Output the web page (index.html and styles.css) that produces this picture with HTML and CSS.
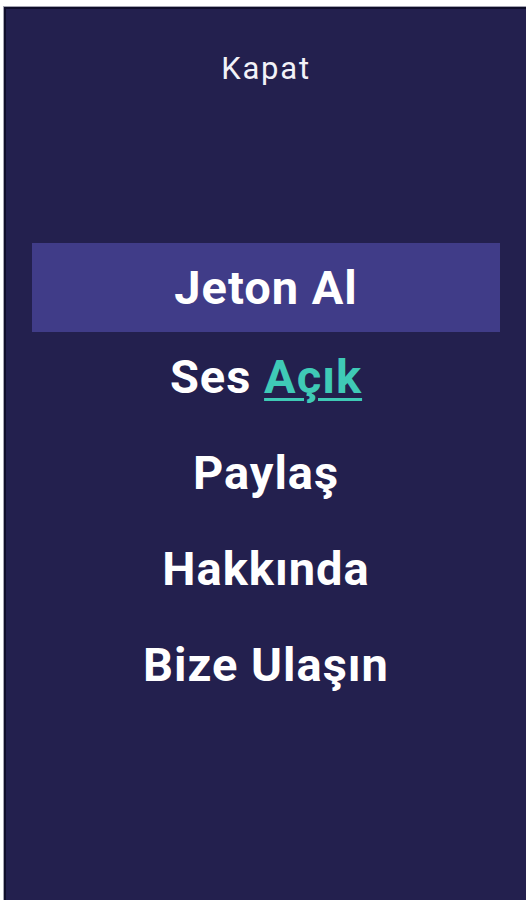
FILE: index.html
```html
<!DOCTYPE html>
<html lang="tr">
<head>
<meta charset="utf-8">
<link rel="stylesheet" href="styles.css">
</head>
<body>
<div class="frame">
  <div class="app">
    <div class="close">Kapat</div>
    <nav class="menu">
      <div class="item active">Jeton Al</div>
      <div class="item">Ses <span class="on">Açık</span></div>
      <div class="item">Paylaş</div>
      <div class="item">Hakkında</div>
      <div class="item">Bize Ulaşın</div>
    </nav>
  </div>
</div>
</body>
</html>
```
FILE: styles.css
```css
html, body {
  margin: 0;
  height: 100%;
}
body {
  background: #ffffff;
  padding: 6px 0 0 3px;
  box-sizing: border-box;
  font-family: Roboto, "Liberation Sans", sans-serif;
}
.frame {
  height: 100%;
  border-top: 1px solid #a4a4b2;
  border-left: 1px solid #a4a4b2;
  box-sizing: border-box;
}
.app {
  height: 100%;
  box-sizing: border-box;
  background: #23204e;
  border-top: 2px solid #0f0e2b;
  border-left: 2px solid #0f0e2b;
  color: #ffffff;
  display: flex;
  flex-direction: column;
}
.close {
  text-align: center;
  font-size: 31px;
  line-height: 36px;
  letter-spacing: 1.8px;
  margin-top: 42px;
  color: #f2f2f8;
}
.menu {
  margin-top: 156px;
  padding: 0 26px;
  display: flex;
  flex-direction: column;
}
.item {
  height: 96px;
  display: flex;
  align-items: center;
  justify-content: center;
  font-size: 47px;
  font-weight: 700;
  letter-spacing: 1px;
  white-space: pre;
}
.item.active {
  background: #403c88;
  height: 89px;
  margin-bottom: -4px;
}
.on {
  color: #3fcab6;
  text-decoration: underline;
  text-decoration-thickness: 3px;
  text-underline-offset: 5px;
}
```
